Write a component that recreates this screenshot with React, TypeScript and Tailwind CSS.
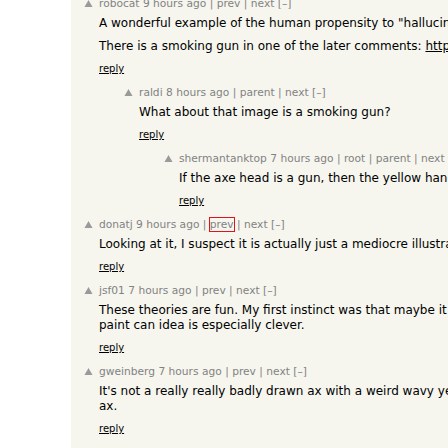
import React from "react";

type C = {
  user: string;
  age: string;
  links: string[];
  focus?: string;
  level: number;
  paras: string[][];
  link?: string;
};

const comments: C[] = [
  {
    user: "robocat",
    age: "9 hours ago",
    links: ["prev"],
    level: 0,
    paras: [
      ['A wonderful example of the human propensity to "hallucinate" meaning.'],
      ["There is a smoking gun in one of the later comments: "],
    ],
    link: "https://news.ycombinator.com/item",
  },
  {
    user: "raldi",
    age: "8 hours ago",
    links: ["parent"],
    level: 1,
    paras: [["What about that image is a smoking gun?"]],
  },
  {
    user: "shermantanktop",
    age: "7 hours ago",
    links: ["root", "parent"],
    level: 2,
    paras: [["If the axe head is a gun, then the yellow handle is smoke."]],
  },
  {
    user: "donatj",
    age: "9 hours ago",
    links: ["prev"],
    focus: "prev",
    level: 0,
    paras: [["Looking at it, I suspect it is actually just a mediocre illustration of an axe."]],
  },
  {
    user: "jsf01",
    age: "7 hours ago",
    links: ["prev"],
    level: 0,
    paras: [
      [
        "These theories are fun. My first instinct was that maybe it was a spray can. The",
        "paint can idea is especially clever.",
      ],
    ],
  },
  {
    user: "gweinberg",
    age: "7 hours ago",
    links: ["prev"],
    level: 0,
    paras: [
      [
        "It's not a really really badly drawn ax with a weird wavy yellow handle, it's a badly drawn",
        "ax.",
      ],
    ],
  },
];

const pads = ["pl-[13px]", "pl-[53px]", "pl-[93px]"];

function Arrow() {
  return (
    <svg width="10" height="10" viewBox="0 0 10 10" className="block">
      <polygon points="4.5,1 8.5,8 0.5,8" fill="#9a9a9a" />
    </svg>
  );
}

function Comment({ c, first }: { c: C; first: boolean }) {
  return (
    <div className={`flex ${pads[c.level]} ${first ? "" : "mt-[11px]"}`}>
      <div className="w-[15px] shrink-0 pt-[2px]">
        <Arrow />
      </div>
      <div className="flex flex-col">
        <div className="h-[14px] leading-[14px] text-[10.67px] text-[#828282] whitespace-nowrap">
          <span>{c.user}</span> <span>{c.age}</span>
          {c.links.map((l) => (
            <React.Fragment key={l}>
              {" | "}
              <span className={c.focus === l ? "outline outline-1 outline-[#e0131b] outline-offset-0" : ""}>{l}</span>
            </React.Fragment>
          ))}
          {" | "}
          <span>next</span> <span>[–]</span>
        </div>
        <div className="mt-[5px] text-[12px] leading-[15px] text-black">
          {c.paras.map((p, i) => (
            <div key={i} className={i > 0 ? "mt-[8px]" : ""}>
              {p.map((line, j) => (
                <div key={j} className="whitespace-nowrap">
                  {line}
                  {c.link && i === c.paras.length - 1 && j === p.length - 1 ? (
                    <span className="underline">{c.link}</span>
                  ) : null}
                </div>
              ))}
            </div>
          ))}
        </div>
        <div className="mt-[8px] h-[13px] leading-[13px] text-[10px] text-black">
          <span className="underline">reply</span>
        </div>
      </div>
    </div>
  );
}

export default function App() {
  return (
    <div
      className="w-[448px] h-[448px] overflow-hidden bg-white flex"
      style={{ fontFamily: '"DejaVu Sans", Verdana, sans-serif' }}
    >
      <div className="ml-[71px] w-[700px] shrink-0 bg-[#f6f6ef] h-full">
        <div className="-mt-[3px]">
          {comments.map((c, i) => (
            <Comment key={i} c={c} first={i === 0} />
          ))}
        </div>
      </div>
    </div>
  );
}
